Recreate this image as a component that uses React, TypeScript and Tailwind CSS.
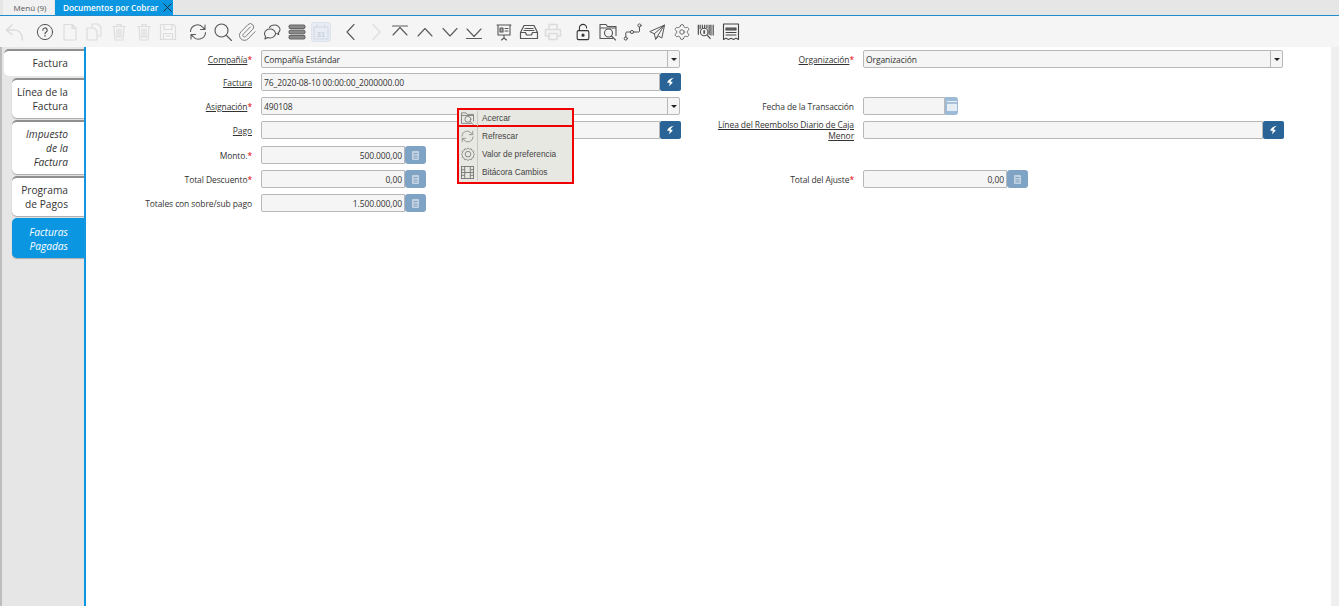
import React from 'react';
import { Paperclip, Settings } from 'lucide-react';

const ACTIVE = '#5a5a5a';
const OFF = '#dcdcdc';

function Svg({ children, color = ACTIVE, size = 20, sw = 1.1 }: { children: React.ReactNode; color?: string; size?: number; sw?: number }) {
  return (
    <svg width={size} height={size} viewBox="0 0 20 20" fill="none" stroke={color} strokeWidth={sw} strokeLinecap="round" strokeLinejoin="round">
      {children}
    </svg>
  );
}

const UndoIcon = () => (
  <Svg color={OFF} sw={1.6}><path d="M7 3 1.500 8 7 12.500M2 8h7c5 0 8.500 3.500 8.500 10" /></Svg>
);
const HelpIcon = () => (
  <Svg color="#555" sw={1}><circle cx="10" cy="10" r="7.600" /><path d="M7.800 8.200a2.200 2.200 0 1 1 3.300 1.900c-.8.4-1.100.8-1.100 1.600" strokeWidth="1.200" /><path d="M10 13.800v.2" strokeWidth="1.400" /></Svg>
);
const NewIcon = () => (
  <Svg color={OFF} sw={1.2}><path d="M4 2.500h8l4 4v11.500H4zM12 2.500v4h4" /></Svg>
);
const CopyIcon = () => (
  <Svg color={OFF} sw={1.2}><path d="M8 5V2h6l3 3v9h-4M3 6h7l3 3v9H3z" /></Svg>
);
const TrashIcon = () => (
  <Svg color={OFF} sw={1.2}><path d="M4 4.500h12M8 4.500V2.500h4v2M5 4.500 6 18h8l1-13.500M8 7v8.500M10 7v8.500M12 7v8.500" /></Svg>
);
const SaveIcon = () => (
  <Svg color={OFF} sw={1.2}><path d="M2.500 2.500h13l2 2v13h-15zM6 2.500v5h8v-5M5.500 17.500v-6h9v6M8 14h4" /></Svg>
);
const RefreshIcon = ({ color = ACTIVE, size = 20 }: { color?: string; size?: number }) => (
  <Svg color={color} size={size} sw={1.1}><path d="M2.500 9.500a7 7 0 0 1 12.500-4l1.800 1.800M17 3v4.500h-4.500M17.500 10.500a7 7 0 0 1-12.500 4l-1.800-1.800M3 17v-4.500h4.500" /></Svg>
);
const SearchIcon = () => (
  <Svg color="#555" sw={1.1}><circle cx="8.500" cy="8.500" r="6.500" /><path d="m13.500 13.500 5 5" /></Svg>
);
const ChatIcon = () => (
  <Svg color="#555" sw={1.1}><path d="M2.500 11.500c0-2.500 2.500-4.500 5.500-4.500s5.500 2 5.500 4.500-2.500 4.500-5.500 4.500c-.8 0-1.500-.1-2.200-.4L3 17l.6-2.500c-.7-.8-1.100-1.900-1.100-3zM7.500 5.500C8.300 4 10.200 3 12.500 3c3 0 5.500 2 5.500 4.500 0 1.300-.6 2.400-1.600 3.200l.3 1.800-2-1" /></Svg>
);
const RowsIcon = () => (
  <svg width="20" height="20" viewBox="0 0 20 20" stroke="#666" strokeWidth="1.100">
    <rect x="2" y="3" width="16" height="3.600" rx="1.500" fill="#8a8a8a" />
    <rect x="2" y="8.200" width="16" height="3.600" rx="1.500" fill="#8a8a8a" />
    <rect x="2" y="13.400" width="16" height="3.600" rx="1.500" fill="#8a8a8a" />
  </svg>
);
const CalendarTile = () => (
  <svg width="20" height="20" viewBox="0 0 20 20">
    <rect x="0.500" y="0.500" width="19" height="19" rx="2" fill="#e8ecf3" stroke="#dde3ed" />
    <path d="M3 5h14M3 5v12h14V5M6 2.500v3M14 2.500v3" fill="none" stroke="#d0d7e4" strokeWidth="1" />
    <text x="10" y="15" textAnchor="middle" fontSize="7.500" fontWeight="700" fill="#c6cfdf" fontFamily="Liberation Sans, sans-serif">31</text>
  </svg>
);
const Chevron = ({ d, color = ACTIVE }: { d: string; color?: string }) => (
  <Svg color={color} sw={1.1}><path d={d} /></Svg>
);
const ReportIcon = () => (
  <Svg color="#555" sw={1.1}><path d="M3 3h14M4 3v10h12V3M10 13v3M7.500 18 10 16l2.500 2" /><path d="M6 6h3v4H6zM11 6.500h3M11 9h3" fill="#aaa" /></Svg>
);
const ArchiveIcon = () => (
  <Svg color="#555" sw={1.200}><path d="M5 3.500h10l3.500 7v6h-17v-6zM1.500 10.500H6.500l1 2.500h5l1-2.500h5M6 6.500h8M5 8.500h10" /></Svg>
);
const PrintIcon = () => (
  <Svg color={OFF} sw={1.500}><path d="M6 7V2.500h8V7M6 14H2.500V7.500h15V14H14M6 11.500h8v6H6z" /></Svg>
);
const LockIcon = () => (
  <Svg color="#333" size={18} sw={1.200}><path d="M6 8V5.500a4 4 0 0 1 8 0" /><rect x="3.500" y="8.500" width="13" height="10" rx="1.500" /><circle cx="10" cy="13.500" r="1.200" fill="#333" /></Svg>
);
const FolderZoomIcon = ({ color = '#555', size = 20 }: { color?: string; size?: number }) => (
  <Svg color={color} size={size} sw={1.100}><path d="M14.500 16.500H2V2.500h6l1.500 2H18v9M2 6h16" /><circle cx="10.500" cy="11" r="4" /><path d="m13.500 14 4 4" /></Svg>
);
const FlowIcon = () => (
  <Svg color="#555" sw={1}><circle cx="2.800" cy="16.500" r="1.600" /><circle cx="9" cy="10" r="1.600" /><circle cx="16.500" cy="3.500" r="1.600" /><path d="M2.800 15v-4c0-.6.4-1 1-1h3.600M10.600 10h5c.6 0 .9-.4.9-1V5" /></Svg>
);
const SendIcon = () => (
  <Svg color="#555" size={18} sw={1.100}><path d="M18 2.500 2 9.500l5 2.500 1.500 6 3-3.500 3.500 2zM18 2.500 7 12M18 2.500 8.500 18" /></Svg>
);
const BarcodeIcon = () => (
  <svg width="18" height="18" viewBox="0 0 20 20" fill="none" stroke="#555">
    <path d="M1.500 2v11M3.500 2v5M6 2v4M8.500 2v4M11 2v4M13.500 2v11M15.500 2v12M18 2v12" strokeWidth="1.400" />
    <circle cx="8" cy="10" r="4.200" strokeWidth="1.300" />
    <path d="M8 8v4" strokeWidth="2" />
    <path d="m11 13.200 4 4.300" strokeWidth="1.300" />
  </svg>
);
const InfoDocIcon = () => (
  <Svg color="#444" sw={1.100}><path d="M2.500 2h15v15.500c-1.200 0-1.200-1.200-2.500-1.200s-1.300 1.200-2.500 1.200-1.200-1.200-2.500-1.200-1.300 1.200-2.500 1.200-1.200-1.200-2.500-1.200-1.200 1.200-2.500 1.200z" /><path d="M5 6h10v2H5z" fill="#777" /><path d="M5 10.500h10M5 13h10" /></Svg>
);
const FilmIcon = () => (
  <svg width="13" height="13" viewBox="0 0 14 14" fill="none" stroke="#777" strokeWidth="1">
    <rect x="0.500" y="0.500" width="13" height="13" />
    <path d="M4 .5v13M10 .5v13M.5 4H4M.5 7H4M.5 10H4M10 4h3.500M10 7h3.500M10 10h3.500M4 7h6" />
  </svg>
);
const PrefIcon = () => (
  <svg width="14" height="14" viewBox="0 0 15 15" fill="none" stroke="#808080">
    <path d="M7.500 1 9 2.300l2-.3.8 1.800 1.800.9-.2 2 1.100 1-1.100 1.400.2 1.800-1.800.9-.8 1.800-2-.3-1.500 1.200L6 13.300l-2 .3-.8-1.800-1.800-.9.2-1.800L.5 7.700l1.100-1-.2-2 1.800-.9L4 2l2 .3z" strokeWidth="0.900" />
    <circle cx="7.500" cy="7.700" r="3" strokeWidth="1" />
  </svg>
);
const LookupGlyph = () => (
  <svg width="10" height="10" viewBox="0 0 10 10" fill="#fff"><path d="M8 .8C5 1 2 3 1 5.800h2.800L3 9.200 6.300 6c.4-.5.1-1.200-.5-1.200H4.600C5 3.200 6.300 1.700 8 .8z" /></svg>
);
const CalcGlyph = () => (
  <svg width="7" height="9" viewBox="0 0 7 9"><rect width="7" height="9" rx="1" fill="#c3d3e2" /><path d="M1.500 2.500h4M1.500 5h4M1.500 7h4" stroke="#7fa3c4" strokeWidth="1" /></svg>
);

type Tool = { icon: React.ReactNode; gap?: boolean };
const tools: Tool[] = [
  { icon: <UndoIcon /> },
  { icon: <HelpIcon />, gap: true },
  { icon: <NewIcon /> },
  { icon: <CopyIcon /> },
  { icon: <TrashIcon /> },
  { icon: <TrashIcon /> },
  { icon: <SaveIcon /> },
  { icon: <RefreshIcon />, gap: true },
  { icon: <SearchIcon /> },
  { icon: <Paperclip size={20} color="#666" strokeWidth={1} /> },
  { icon: <ChatIcon /> },
  { icon: <RowsIcon /> },
  { icon: <CalendarTile /> },
  { icon: <Chevron d="M13 2.500 6 10l7 7.500" />, gap: true },
  { icon: <Chevron d="M7 2.500 14 10l-7 7.500" color={OFF} /> },
  { icon: <Chevron d="M2.500 4h15M3 13 10 5.500l7 7.500" /> },
  { icon: <Chevron d="M3 14 10 6.500l7 7.500" /> },
  { icon: <Chevron d="M3 6.500 10 14l7-7.500" /> },
  { icon: <Chevron d="M2.500 16.500h15M3 7 10 14.500 17 7" /> },
  { icon: <ReportIcon />, gap: true },
  { icon: <ArchiveIcon /> },
  { icon: <PrintIcon /> },
  { icon: <LockIcon />, gap: true },
  { icon: <FolderZoomIcon /> },
  { icon: <FlowIcon /> },
  { icon: <SendIcon /> },
  { icon: <Settings size={18} color="#555" strokeWidth={1.1} /> },
  { icon: <BarcodeIcon /> },
  { icon: <InfoDocIcon /> },
];

const sideTabs = [
  { label: 'Línea de la Factura', h: 'h-[40px]' },
  { label: 'Impuesto de la Factura', h: 'h-[54px]', italic: true },
  { label: 'Programa de Pagos', h: 'h-[40px]' },
  { label: 'Facturas Pagadas', h: 'h-[40px]', italic: true, active: true },
];

function Label({ text, link, req }: { text: string; link?: boolean; req?: boolean }) {
  return (
    <div className="flex justify-end text-right text-[8.500px] tracking-[-0.1px] leading-[11px] text-[#333] h-[18px] items-center">
      <span className="max-w-[138px]">
        <span className={link ? 'underline' : ''}>{text}</span>
        {req && <span className="text-[#e00000]">*</span>}
      </span>
    </div>
  );
}

const boxCls = 'h-[18px] bg-[#f5f5f5] border border-[#b8b8b8] rounded-[2px] text-[8.500px] tracking-[-0.1px] leading-[17px] text-[#333] px-[2px]';

function SelectField({ value, wide }: { value: string; wide?: boolean }) {
  return (
    <div className={`${boxCls} flex justify-between ${wide ? 'w-[420px]' : 'w-[419px]'} pr-0`}>
      <span>{value}</span>
      <span className="w-[12px] border-l border-[#b8b8b8] flex items-center justify-center">
        <span className="w-0 h-0 border-x-[3px] border-x-transparent border-t-[3px] border-t-[#222]" />
      </span>
    </div>
  );
}

function LookupField({ value = '', wide }: { value?: string; wide?: boolean }) {
  return (
    <div className="flex">
      <div className={`${boxCls} ${wide ? 'w-[400px]' : 'w-[399px]'} rounded-r-none`}>{value}</div>
      <span className="w-[21px] h-[18px] bg-[#2a6496] rounded-[2px] flex items-center justify-center">
        <LookupGlyph />
      </span>
    </div>
  );
}

function NumberField({ value }: { value: string }) {
  return (
    <div className="flex">
      <div className={`${boxCls} w-[144px] text-right rounded-r-none`}>{value}</div>
      <span className="w-[21px] h-[18px] bg-[#7fa3c4] rounded-[3px] flex items-center justify-center">
        <CalcGlyph />
      </span>
    </div>
  );
}

function DateField() {
  return (
    <div className="flex">
      <div className={`${boxCls} w-[82px] rounded-r-none`} />
      <span className="w-[13px] h-[18px] bg-[#9dbad6] rounded-r-[3px] flex items-center justify-center">
        <svg width="10" height="10" viewBox="0 0 10 10"><rect width="10" height="10" fill="#e6eef5" /><path d="M0 2h10" stroke="#7fa3c4" strokeWidth="1.200" /></svg>
      </span>
    </div>
  );
}

function ContextItem({ icon, label }: { icon: React.ReactNode; label: string }) {
  return (
    <div className="flex items-center h-[18px]">
      <span className="w-[17px] h-full flex items-center justify-center border-r border-[#c9c9c3] box-content pr-px">{icon}</span>
      <span className="pl-[4px] text-[8.300px] text-[#444]" style={{ fontFamily: '"Liberation Sans", sans-serif' }}>{label}</span>
    </div>
  );
}

export default function App() {
  return (
    <div className="relative h-[606px] w-[1339px] overflow-hidden bg-white flex flex-col" style={{ fontFamily: '"Open Sans", sans-serif' }}>
      {/* tab strip */}
      <div className="h-[16px] shrink-0 bg-[#e6e6e6] border-b border-[#1f8ccb] flex pl-[3px]">
        <div className="w-[51px] bg-[#f1f1f1] text-[8px] leading-[15px] text-[#555] text-center pl-[3px]">Menú (9)</div>
        <div className="ml-[1px] w-[118px] bg-[#0a96e0] text-white text-[8.200px] font-semibold leading-[15px] pl-[8px] flex items-center justify-between pr-[1px]">
          <span>Documentos por Cobrar</span>
          <svg width="9" height="9" viewBox="0 0 9 9" stroke="#234" strokeWidth="1"><path d="M.5.5l8 8M8.500.5l-8 8" /></svg>
        </div>
      </div>

      {/* toolbar */}
      <div className="h-[31px] shrink-0 bg-[#f5f5f5] flex items-center pl-[3px]">
        {tools.map((t, i) => (
          <span key={i} className={`w-[24.600px] flex items-center justify-center ${t.gap ? 'ml-[5.400px]' : ''}`}>
            {t.icon}
          </span>
        ))}
      </div>

      <div className="flex flex-1 min-h-0">
        {/* side tabs */}
        <div className="w-[86px] shrink-0 bg-[#e6e6e6] border-r-2 border-[#0a96e0] border-l-2 border-l-[#bdbdbd] pt-[2px] flex flex-col items-end">
          <div className="w-[80px] h-[27px] bg-white rounded-l-[5px] border-t-2 border-[#8f8f8f] text-[10.200px] leading-[24px] text-[#333] text-right pr-[16px]">Factura</div>
          <div className="flex flex-col items-end gap-[2px] mt-[2px]">
            {sideTabs.map((t) => (
              <div
                key={t.label}
                className={`w-[72px] ${t.h} rounded-l-[5px] border-t-2 text-[10.200px] leading-[14px] text-right pr-[16px] pl-[2px] flex items-center justify-end shadow-[0_1px_1px_#aaa] ${t.active ? 'bg-[#0a96e0] border-[#0a96e0] text-white' : 'bg-white border-[#8f8f8f] text-[#333]'} ${t.italic ? 'italic' : ''}`}
              >
                <span>{t.label}</span>
              </div>
            ))}
          </div>
        </div>

        {/* form */}
        <div className="flex-1 pt-[3px] grid grid-cols-[166px_420px_164px_421px] grid-rows-[23px_24px_24px_25px_24px_24px_24px] auto-rows-min content-start gap-x-[9px]">
          <Label text="Compañía" link req />
          <SelectField value="Compañía Estándar" />
          <Label text="Organización" link req />
          <SelectField value="Organización" wide />

          <Label text="Factura" link />
          <LookupField value="76_2020-08-10 00:00:00_2000000.00" />
          <div />
          <div />

          <Label text="Asignación" link req />
          <SelectField value="490108" />
          <Label text="Fecha de la Transacción" />
          <DateField />

          <Label text="Pago" link />
          <LookupField />
          <Label text="Línea del Reembolso Diario de Caja Menor" link />
          <LookupField wide />

          <Label text="Monto." req />
          <NumberField value="500.000,00" />
          <div />
          <div />

          <Label text="Total Descuento" req />
          <NumberField value="0,00" />
          <Label text="Total del Ajuste" req />
          <NumberField value="0,00" />

          <Label text="Totales con sobre/sub pago" />
          <NumberField value="1.500.000,00" />
        </div>

        <div className="w-[8px] shrink-0 bg-[#efefef]" />
      </div>

      {/* context menu */}
      <div className="absolute left-[457px] top-[108px] w-[117px] bg-[#e8e8e2]">
        <div className="border-2 border-[#f00000] h-[19px] pt-[1px] flex flex-col justify-center">
          <ContextItem icon={<FolderZoomIcon color="#777" size={15} />} label="Acercar" />
        </div>
        <div className="border-2 border-t-0 border-[#f00000] pb-[1px]">
          <ContextItem icon={<RefreshIcon color="#888" size={15} />} label="Refrescar" />
          <ContextItem icon={<PrefIcon />} label="Valor de preferencia" />
          <ContextItem icon={<FilmIcon />} label="Bitácora Cambios" />
        </div>
      </div>
    </div>
  );
}
